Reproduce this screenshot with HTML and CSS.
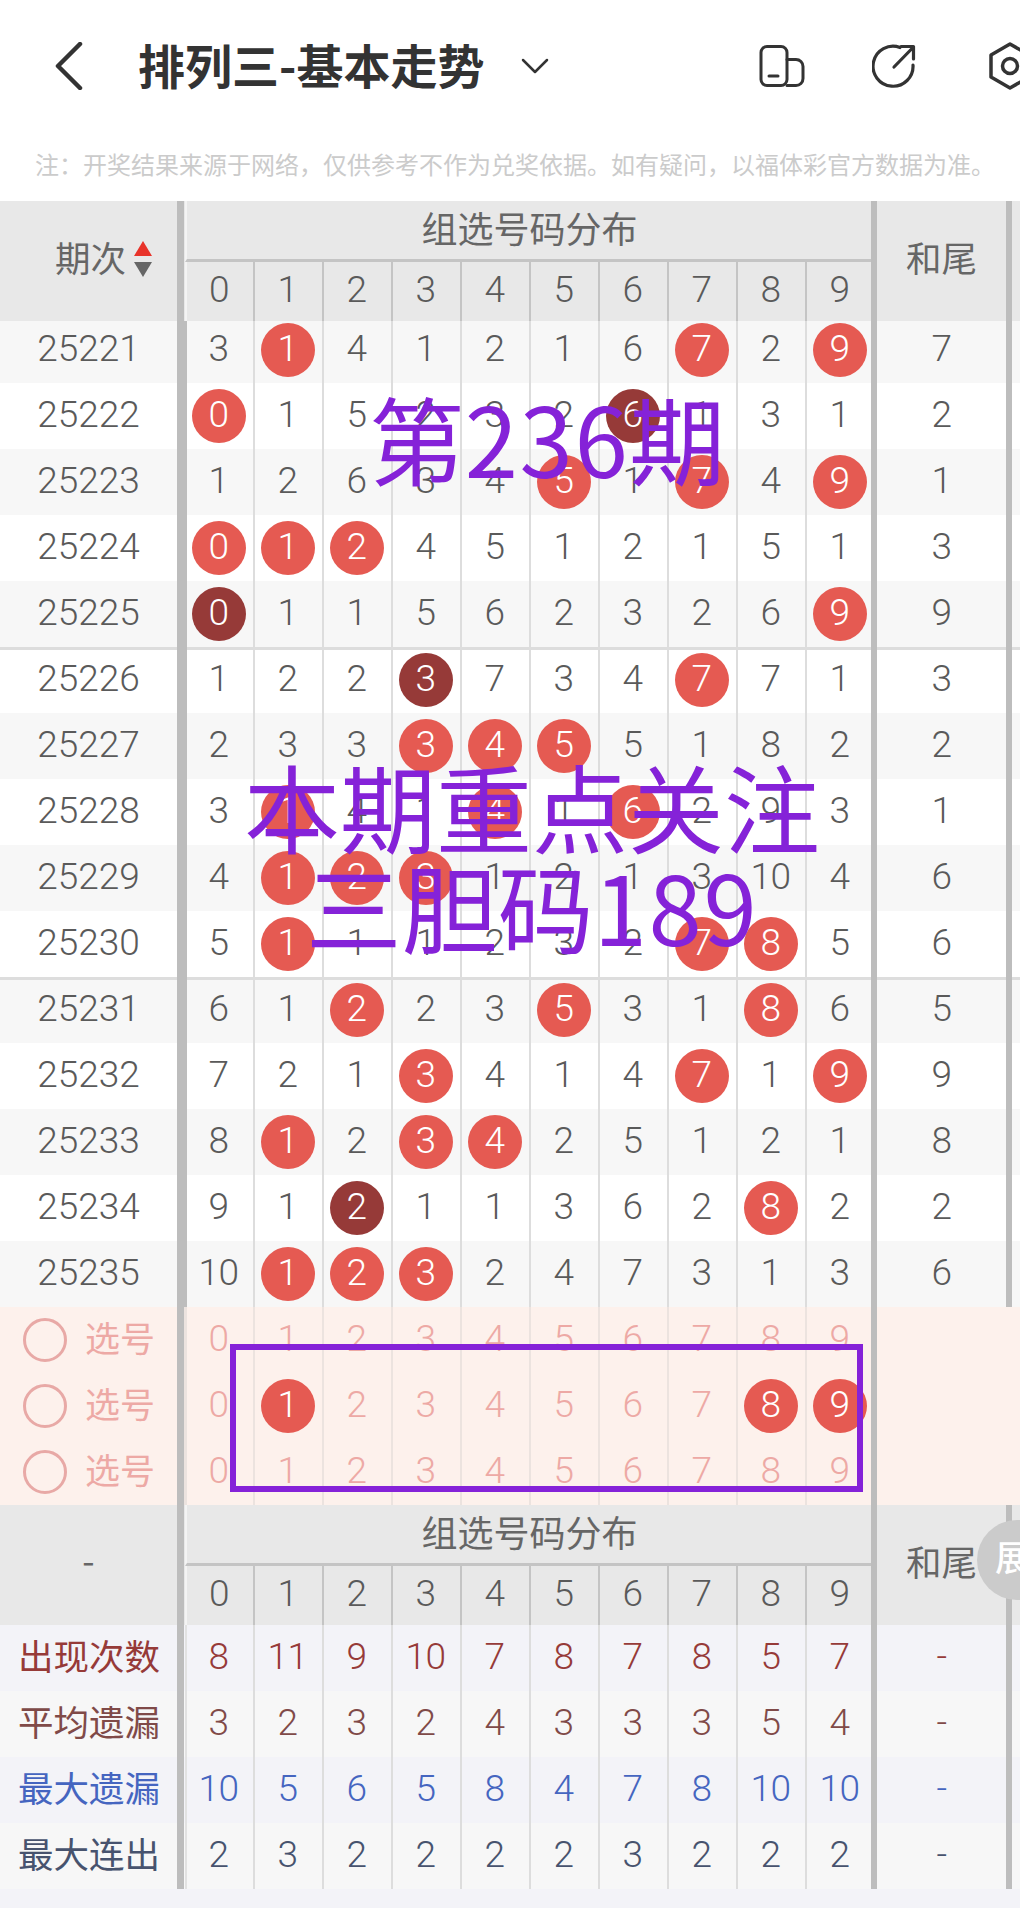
FILE: index.html
```html
<!DOCTYPE html>
<html lang="zh-CN">
<head>
<meta charset="utf-8">
<title>排列三-基本走势</title>
<link rel="stylesheet" href="styles.css">
</head>
<body>
<div class="page">
  <header class="bar">
    <svg class="ic-back" viewBox="0 0 28 48"><path d="M25 2 3 24l22 22"/></svg>
    <h1 class="title">排列三-基本走势</h1>
    <svg class="ic-down" viewBox="0 0 28 16"><path d="M2 2l12 12L26 2"/></svg>
    <svg class="ic-phone" viewBox="0 0 46 42"><rect x="2" y="1.5" width="26" height="39" rx="6"/><path d="M28 14.5h9a7 7 0 0 1 7 7v12a7 7 0 0 1-7 7h-9"/><path d="M10 31h9"/></svg>
    <svg class="ic-share" viewBox="0 0 44 44"><path d="M28 3.5A20 20 0 1 0 41 21"/><path d="M22 23 41 3.500M29 2.500h12.500V15"/></svg>
    <svg class="ic-hex" viewBox="0 0 44 48"><path d="M21 2 40 13v22L21 46 2 35V13z"/><circle cx="21" cy="24" r="7.500"/></svg>
  </header>
  <p class="note">注：开奖结果来源于网络，仅供参考不作为兑奖依据。如有疑问，以福体彩官方数据为准。</p>

  <section class="thead">
    <div class="hlab"><span>期次</span><svg class="sort" viewBox="0 0 18 36"><path class="up" d="M9 0l9 15H0z"/><path class="dn" d="M0 21h18L9 36z"/></svg></div>
    <div class="hgroup">组选号码分布</div>
    <div class="hn">0</div><div class="hn">1</div><div class="hn">2</div><div class="hn">3</div><div class="hn">4</div><div class="hn">5</div><div class="hn">6</div><div class="hn">7</div><div class="hn">8</div><div class="hn">9</div>
    <div class="htail">和尾</div>
    <div class="hedge"></div>
  </section>

  <section class="tbody">
    <div class="row alt"><div class="lab">25221</div><span class="n">3</span><span class="n"><b class="ball">1</b></span><span class="n">4</span><span class="n">1</span><span class="n">2</span><span class="n">1</span><span class="n">6</span><span class="n"><b class="ball">7</b></span><span class="n">2</span><span class="n"><b class="ball">9</b></span><div class="t">7</div><div class="e"></div></div>
    <div class="row"><div class="lab">25222</div><span class="n"><b class="ball">0</b></span><span class="n">1</span><span class="n">5</span><span class="n">2</span><span class="n">3</span><span class="n">2</span><span class="n"><b class="ball dark">6</b></span><span class="n">1</span><span class="n">3</span><span class="n">1</span><div class="t">2</div><div class="e"></div></div>
    <div class="row alt"><div class="lab">25223</div><span class="n">1</span><span class="n">2</span><span class="n">6</span><span class="n">3</span><span class="n">4</span><span class="n"><b class="ball">5</b></span><span class="n">1</span><span class="n"><b class="ball">7</b></span><span class="n">4</span><span class="n"><b class="ball">9</b></span><div class="t">1</div><div class="e"></div></div>
    <div class="row"><div class="lab">25224</div><span class="n"><b class="ball">0</b></span><span class="n"><b class="ball">1</b></span><span class="n"><b class="ball">2</b></span><span class="n">4</span><span class="n">5</span><span class="n">1</span><span class="n">2</span><span class="n">1</span><span class="n">5</span><span class="n">1</span><div class="t">3</div><div class="e"></div></div>
    <div class="row alt"><div class="lab">25225</div><span class="n"><b class="ball dark">0</b></span><span class="n">1</span><span class="n">1</span><span class="n">5</span><span class="n">6</span><span class="n">2</span><span class="n">3</span><span class="n">2</span><span class="n">6</span><span class="n"><b class="ball">9</b></span><div class="t">9</div><div class="e"></div></div>
    <div class="row sep"><div class="lab">25226</div><span class="n">1</span><span class="n">2</span><span class="n">2</span><span class="n"><b class="ball dark">3</b></span><span class="n">7</span><span class="n">3</span><span class="n">4</span><span class="n"><b class="ball">7</b></span><span class="n">7</span><span class="n">1</span><div class="t">3</div><div class="e"></div></div>
    <div class="row alt"><div class="lab">25227</div><span class="n">2</span><span class="n">3</span><span class="n">3</span><span class="n"><b class="ball">3</b></span><span class="n"><b class="ball">4</b></span><span class="n"><b class="ball">5</b></span><span class="n">5</span><span class="n">1</span><span class="n">8</span><span class="n">2</span><div class="t">2</div><div class="e"></div></div>
    <div class="row"><div class="lab">25228</div><span class="n">3</span><span class="n"><b class="ball">1</b></span><span class="n">4</span><span class="n">1</span><span class="n"><b class="ball">4</b></span><span class="n">1</span><span class="n"><b class="ball">6</b></span><span class="n">2</span><span class="n">9</span><span class="n">3</span><div class="t">1</div><div class="e"></div></div>
    <div class="row alt"><div class="lab">25229</div><span class="n">4</span><span class="n"><b class="ball">1</b></span><span class="n"><b class="ball">2</b></span><span class="n"><b class="ball">3</b></span><span class="n">1</span><span class="n">2</span><span class="n">1</span><span class="n">3</span><span class="n">10</span><span class="n">4</span><div class="t">6</div><div class="e"></div></div>
    <div class="row"><div class="lab">25230</div><span class="n">5</span><span class="n"><b class="ball">1</b></span><span class="n">1</span><span class="n">1</span><span class="n">2</span><span class="n">3</span><span class="n">2</span><span class="n"><b class="ball">7</b></span><span class="n"><b class="ball">8</b></span><span class="n">5</span><div class="t">6</div><div class="e"></div></div>
    <div class="row alt sep"><div class="lab">25231</div><span class="n">6</span><span class="n">1</span><span class="n"><b class="ball">2</b></span><span class="n">2</span><span class="n">3</span><span class="n"><b class="ball">5</b></span><span class="n">3</span><span class="n">1</span><span class="n"><b class="ball">8</b></span><span class="n">6</span><div class="t">5</div><div class="e"></div></div>
    <div class="row"><div class="lab">25232</div><span class="n">7</span><span class="n">2</span><span class="n">1</span><span class="n"><b class="ball">3</b></span><span class="n">4</span><span class="n">1</span><span class="n">4</span><span class="n"><b class="ball">7</b></span><span class="n">1</span><span class="n"><b class="ball">9</b></span><div class="t">9</div><div class="e"></div></div>
    <div class="row alt"><div class="lab">25233</div><span class="n">8</span><span class="n"><b class="ball">1</b></span><span class="n">2</span><span class="n"><b class="ball">3</b></span><span class="n"><b class="ball">4</b></span><span class="n">2</span><span class="n">5</span><span class="n">1</span><span class="n">2</span><span class="n">1</span><div class="t">8</div><div class="e"></div></div>
    <div class="row"><div class="lab">25234</div><span class="n">9</span><span class="n">1</span><span class="n"><b class="ball dark">2</b></span><span class="n">1</span><span class="n">1</span><span class="n">3</span><span class="n">6</span><span class="n">2</span><span class="n"><b class="ball">8</b></span><span class="n">2</span><div class="t">2</div><div class="e"></div></div>
    <div class="row alt"><div class="lab">25235</div><span class="n">10</span><span class="n"><b class="ball">1</b></span><span class="n"><b class="ball">2</b></span><span class="n"><b class="ball">3</b></span><span class="n">2</span><span class="n">4</span><span class="n">7</span><span class="n">3</span><span class="n">1</span><span class="n">3</span><div class="t">6</div><div class="e"></div></div>

    <div class="row pick"><div class="lab"><i class="ring"></i><span>选号</span></div><span class="n">0</span><span class="n">1</span><span class="n">2</span><span class="n">3</span><span class="n">4</span><span class="n">5</span><span class="n">6</span><span class="n">7</span><span class="n">8</span><span class="n">9</span><div class="t"></div><div class="e"></div></div>
    <div class="row pick"><div class="lab"><i class="ring"></i><span>选号</span></div><span class="n">0</span><span class="n"><b class="ball">1</b></span><span class="n">2</span><span class="n">3</span><span class="n">4</span><span class="n">5</span><span class="n">6</span><span class="n">7</span><span class="n"><b class="ball">8</b></span><span class="n"><b class="ball">9</b></span><div class="t"></div><div class="e"></div></div>
    <div class="row pick"><div class="lab"><i class="ring"></i><span>选号</span></div><span class="n">0</span><span class="n">1</span><span class="n">2</span><span class="n">3</span><span class="n">4</span><span class="n">5</span><span class="n">6</span><span class="n">7</span><span class="n">8</span><span class="n">9</span><div class="t"></div><div class="e"></div></div>
  </section>

  <section class="thead foot">
    <div class="hlab mid"><span>-</span></div>
    <div class="hgroup">组选号码分布</div>
    <div class="hn">0</div><div class="hn">1</div><div class="hn">2</div><div class="hn">3</div><div class="hn">4</div><div class="hn">5</div><div class="hn">6</div><div class="hn">7</div><div class="hn">8</div><div class="hn">9</div>
    <div class="htail">和尾</div>
    <div class="hedge"></div>
  </section>

  <section class="tfoot">
    <div class="row stat c-red"><div class="lab">出现次数</div><span class="n">8</span><span class="n">11</span><span class="n">9</span><span class="n">10</span><span class="n">7</span><span class="n">8</span><span class="n">7</span><span class="n">8</span><span class="n">5</span><span class="n">7</span><div class="t">-</div><div class="e"></div></div>
    <div class="row stat alt c-brown"><div class="lab">平均遗漏</div><span class="n">3</span><span class="n">2</span><span class="n">3</span><span class="n">2</span><span class="n">4</span><span class="n">3</span><span class="n">3</span><span class="n">3</span><span class="n">5</span><span class="n">4</span><div class="t">-</div><div class="e"></div></div>
    <div class="row stat c-blue"><div class="lab">最大遗漏</div><span class="n">10</span><span class="n">5</span><span class="n">6</span><span class="n">5</span><span class="n">8</span><span class="n">4</span><span class="n">7</span><span class="n">8</span><span class="n">10</span><span class="n">10</span><div class="t">-</div><div class="e"></div></div>
    <div class="row stat alt c-slate"><div class="lab">最大连出</div><span class="n">2</span><span class="n">3</span><span class="n">2</span><span class="n">2</span><span class="n">2</span><span class="n">2</span><span class="n">3</span><span class="n">2</span><span class="n">2</span><span class="n">2</span><div class="t">-</div><div class="e"></div></div>
  </section>

  <div class="expand">展</div>
  <div class="mark mark-a">第<span class="dg">236</span>期</div>
  <div class="mark mark-b">本期重点关注<br>三胆码<span class="dg">189</span></div>
  <div class="frame"></div>
</div>
</body>
</html>
```

FILE: styles.css
```css
* { box-sizing: border-box; }
html, body { margin: 0; padding: 0; }
body { background: #f3f3f8; }
.page {
  position: relative;
  width: 1020px;
  height: 1908px;
  overflow: hidden;
  font-family: "Noto Sans CJK SC", "Noto Sans", sans-serif;
}

/* top bar */
.bar {
  display: flex;
  align-items: center;
  height: 132px;
  background: #fff;
  padding-left: 55px;
}
.bar svg { flex: none; fill: none; stroke: #333; stroke-linecap: round; stroke-linejoin: round; }
.ic-back { width: 28px; height: 48px; stroke-width: 4.500; }
.title {
  flex: none;
  margin: -4px 0 0 55px;
  font-size: 47px;
  font-weight: 700;
  line-height: 60px;
  color: #333;
  white-space: nowrap;
}
.ic-down { width: 28px; height: 16px; margin-left: 37px; stroke-width: 2.500; }
.ic-phone { width: 46px; height: 42px; margin-left: 210px; stroke-width: 3; }
.ic-share { width: 44px; height: 44px; margin-left: 67px; stroke-width: 3.200; }
.ic-hex { width: 44px; height: 48px; margin-left: 73px; stroke-width: 3.500; }

.note {
  margin: 0;
  height: 69px;
  padding: 17px 0 0 35px;
  background: #fff;
  font-size: 24px;
  line-height: 30px;
  color: #cbcbcb;
  white-space: nowrap;
}

/* header blocks */
.thead {
  position: relative;
  z-index: 1;
  display: grid;
  grid-template-columns: 184px repeat(10, 69px) 138px 8px;
  grid-template-rows: 61px 59px;
  height: 120px;
  background: #e8e8e8;
  color: #666;
  font-size: 35.500px;
}
.hlab {
  grid-row: 1 / 3;
  display: flex;
  align-items: center;
  padding: 0 0 9px 55px;
  border-right: 7px solid #bdbdbd;
  gap: 8px;
}
.hlab.mid { justify-content: center; padding: 0 0 12px 0; }
.sort { width: 18px; height: 36px; flex: none; margin-top: 4px; }
.up { fill: #e8332a; }
.dn { fill: #666; }
.hgroup {
  grid-column: 2 / 12;
  margin-left: 1px;
  border-left: 2px solid #f4f4f4;
  border-bottom: 3px solid #c4c4c4;
  text-align: center;
  font-size: 36px;
  line-height: 52px;
  padding-right: 2px;
}
.hn {
  display: flex;
  align-items: center;
  justify-content: center;
  padding: 0 2px 4px 0;
  border-left: 2px solid #c4c4c4;
  font-family: Roboto, sans-serif;
  font-size: 37px;
  font-weight: 300;
  letter-spacing: -.5px;
  color: #5a5a5a;
}
.hgroup + .hn { margin-left: 1px; border-left-color: #f4f4f4; }
.htail {
  grid-column: 12;
  grid-row: 1 / 3;
  margin-left: -3px;
  display: flex;
  align-items: center;
  justify-content: center;
  padding-bottom: 9px;
  border-left: 6px solid #bdbdbd;
  border-right: 6px solid #bdbdbd;
}
.hedge { grid-column: 13; grid-row: 1 / 3; }
.foot .hlab span, .foot .htail { line-height: 1; }

/* rows */
.tbody { margin-top: -4px; }
.row {
  display: grid;
  grid-template-columns: 184px repeat(10, 69px) 138px 8px;
  height: 66px;
  background: #fff;
  color: #5a5a5a;
  font-family: Roboto, sans-serif;
  font-size: 37px;
  font-weight: 300;
  letter-spacing: -.5px;
}
.row.alt { background: #f7f7f7; }
.row.sep { box-shadow: inset 0 3px 0 #dddddd; }
.lab {
  display: flex;
  align-items: center;
  justify-content: center;
  padding-bottom: 4px;
  border-right: 7px solid #bdbdbd;
  letter-spacing: 0;
}
.n {
  display: flex;
  align-items: center;
  justify-content: center;
  padding: 0 2px 4px 0;
  border-left: 2px solid #dddddd;
}
.lab + .n { border-left: 3px solid #bdbdbd; padding-right: 3px; }
.t {
  margin-left: -3px;
  display: flex;
  align-items: center;
  justify-content: center;
  padding-bottom: 4px;
  border-left: 6px solid #bdbdbd;
  border-right: 6px solid #bdbdbd;
}
.ball {
  flex: none;
  display: flex;
  align-items: center;
  justify-content: center;
  width: 54px;
  height: 54px;
  margin-bottom: -4px;
  padding-bottom: 3px;
  border-radius: 50%;
  background: #e55a52;
  color: #fff;
  font-weight: 300;
}
.ball.dark { background: #963a38; }

/* pick rows */
.row.pick { background: #fdf1ec; color: #eda9a5; }
.pick .n { border-left-color: #ece3df; }
.pick .t { border-right: 0; }
.pick .lab {
  justify-content: flex-start;
  padding: 0 0 8px 23px;
  font-family: "Noto Sans CJK SC", sans-serif;
  font-size: 35px;
  font-weight: 400;
  letter-spacing: 0;
}
.ring {
  flex: none;
  width: 44px;
  height: 44px;
  margin: 8px 18px 0 0;
  border: 3px solid #e8a9a6;
  border-radius: 50%;
}

/* stats */
.row.stat { background: #f3f3f8; }
.row.stat.alt { background: #f7f7f7; }
.stat .lab {
  padding: 0 0 8px 1px;
  font-family: "Noto Sans CJK SC", sans-serif;
  font-size: 35.500px;
  font-weight: 400;
  letter-spacing: 0;
}
.stat .lab + .n { margin-left: 1px; border-left: 2px solid #e2e2e2; padding-right: 3px; }
.row.c-red { color: #963a38; }
.row.c-brown { color: #804a48; }
.row.c-blue { color: #4565c0; }
.row.c-slate { color: #47536e; }

/* overlays */
.expand {
  position: absolute;
  z-index: 2;
  left: 977px;
  top: 1520px;
  width: 80px;
  height: 80px;
  padding-left: 18px;
  border-radius: 50%;
  background: #cbcbcb;
  color: #fff;
  font-size: 35px;
  font-weight: 500;
  line-height: 72px;
}
.mark {
  position: absolute;
  z-index: 3;
  width: 1068px;
  text-align: center;
  color: #8522d8;
  font-size: 96px;
  white-space: nowrap;
}
.dg { letter-spacing: 1.500px; }
.mark-a { top: 372px; left: 13px; line-height: 130px; }
.mark-b { top: 755px; left: -2px; line-height: 100px; }
.frame {
  position: absolute;
  z-index: 3;
  left: 230px;
  top: 1344px;
  width: 633px;
  height: 148px;
  border: 6px solid #8522d8;
}
```
